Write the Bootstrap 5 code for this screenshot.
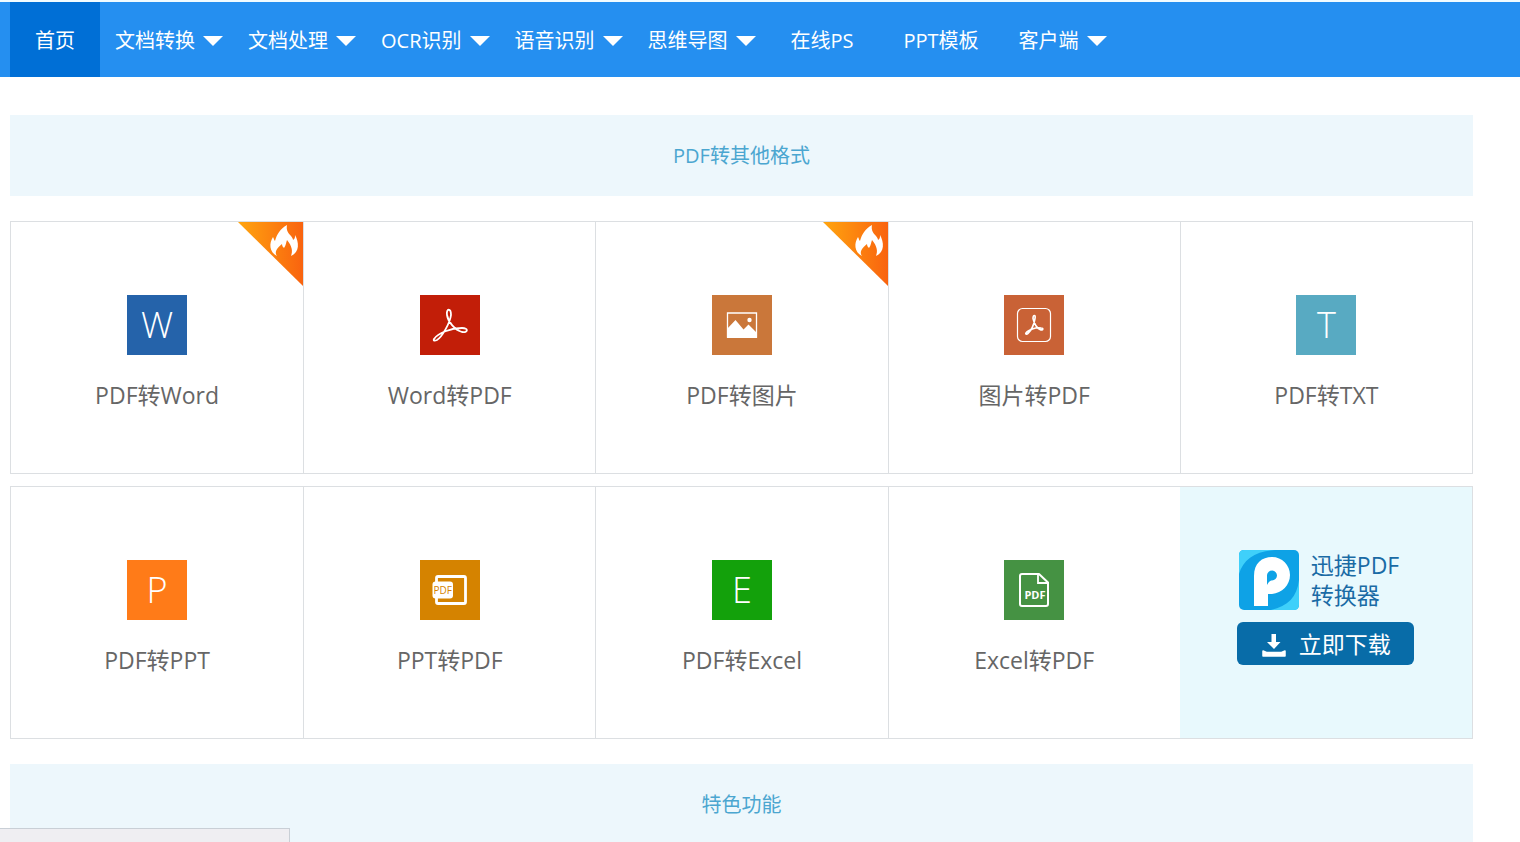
<!DOCTYPE html>
<html lang="zh-CN">
<head>
<meta charset="utf-8">
<meta name="viewport" content="width=device-width, initial-scale=1">
<title>迅捷PDF转换器</title>
<link href="https://cdn.jsdelivr.net/npm/bootstrap@5.3.0/dist/css/bootstrap.min.css" rel="stylesheet">
<style>
  body { font-family: "Open Sans", "Noto Sans CJK SC", sans-serif; font-size: 20px; line-height: 30px; color: #666; background: #fff; }
  .site-bar { background: #258ff0; border-top: 2px solid #f1fbff; padding-left: 10px; }
  .site-bar .nav-link { height: 75px; padding: 2px 25px 0; color: #fff; white-space: nowrap; }
  .site-bar .nav-link.has-menu { padding: 2px 10px 0 15px; gap: 8px; }
  .site-bar .nav-link.active { background: #006fd6; }
  .page-body { padding: 38px 47px 0 10px; }
  .section-band { height: 81px; background: #edf7fc; color: #4ba6d0; font-size: 20px; font-weight: 400; }
  .tool-row { border: 1px solid #dcdfe2; }
  .tool-row > .col + .col:not(.promo) { border-left: 1px solid #dcdfe2; }
  .tool { height: 251px; padding-top: 73px; gap: 25px; color: #666; font-size: 23px; }
  .tool-icon { width: 60px; height: 60px; color: #fff; font-size: 36px; font-weight: 300; }
  .hot-flag { width: 65px; height: 64px; }
  .promo { background: #e8f9fd; color: #1a6ba5; padding-bottom: 10px; gap: 12px; }
  .promo-head { width: 174px; gap: 12px; font-size: 23px; }
  .btn-get { width: 177px; height: 43px; gap: 12px; background: #086ca8; color: #fff; border: 0; border-radius: 6px; font-size: 23px; line-height: 30px; }
  .btn-get:hover { background: #075f94; color: #fff; }
  .gap-row { margin-top: 12px; }
  .gap-block { margin-top: 25px; }
  .status-strip { width: 290px; height: 14px; background: #efeef2; border: 1px solid #c9cfd6; border-width: 1px 1px 0 0; }
</style>
</head>
<body>
<svg class="position-absolute" width="0" height="0" aria-hidden="true">
  <defs>
    <linearGradient id="hotFill" x1="0" y1="0" x2="1" y2="0"><stop offset="0" stop-color="#ffa50f"/><stop offset="1" stop-color="#f9630f"/></linearGradient>
  </defs>
  <symbol id="caret" viewBox="0 0 20 10"><path d="M0 0h20L10 10z" fill="#fff"/></symbol>
  <symbol id="hot" viewBox="0 0 65 64">
    <path d="M0 0h65v64z" fill="url(#hotFill)"/>
    <path d="M39 34C31 30 31 21 35 15c1 2 1 3 2 4 2-7 5-12 12-16-1 5 1 8 4 11 1 1 2 3 2 4 2-1 2-3 2-5 4 7 5 17-4 21 2-5 1-10-4-16-1 3-1 5-3 8-1-1-2-2-2-4-5 4-8 8-5 12z" fill="#fff"/>
  </symbol>
</svg>

<nav class="site-bar" aria-label="主导航">
  <ul class="nav flex-nowrap">
    <li class="nav-item"><a class="nav-link active d-flex align-items-center" href="#" aria-current="page">首页</a></li>
    <li class="nav-item"><a class="nav-link has-menu d-flex align-items-center" href="#">文档转换<svg width="20" height="10"><use href="#caret"/></svg></a></li>
    <li class="nav-item"><a class="nav-link has-menu d-flex align-items-center" href="#">文档处理<svg width="20" height="10"><use href="#caret"/></svg></a></li>
    <li class="nav-item"><a class="nav-link has-menu d-flex align-items-center" href="#">OCR识别<svg width="20" height="10"><use href="#caret"/></svg></a></li>
    <li class="nav-item"><a class="nav-link has-menu d-flex align-items-center" href="#">语音识别<svg width="20" height="10"><use href="#caret"/></svg></a></li>
    <li class="nav-item"><a class="nav-link has-menu d-flex align-items-center" href="#">思维导图<svg width="20" height="10"><use href="#caret"/></svg></a></li>
    <li class="nav-item"><a class="nav-link d-flex align-items-center" href="#">在线PS</a></li>
    <li class="nav-item"><a class="nav-link d-flex align-items-center" href="#">PPT模板</a></li>
    <li class="nav-item"><a class="nav-link has-menu d-flex align-items-center" href="#">客户端<svg width="20" height="10"><use href="#caret"/></svg></a></li>
  </ul>
</nav>

<main class="page-body">
  <h2 class="section-band d-flex align-items-center justify-content-center mb-0">PDF转其他格式</h2>

  <div class="row row-cols-5 g-0 tool-row gap-block">
    <div class="col position-relative">
      <a class="tool d-flex flex-column align-items-center text-decoration-none" href="#">
        <span class="tool-icon d-flex align-items-center justify-content-center" style="background:#2563aa">W</span>
        <span>PDF转Word</span>
      </a>
      <svg class="hot-flag position-absolute top-0 end-0" aria-hidden="true"><use href="#hot"/></svg>
    </div>
    <div class="col">
      <a class="tool d-flex flex-column align-items-center text-decoration-none" href="#">
        <svg class="tool-icon" viewBox="0 0 60 60" style="background:#c21e08" aria-hidden="true">
          <path d="M14 44C18 38 31 33 42 33c7 0 6 5 0 4-7-2-14-10-15-17-1-7 4-7 4 0-1 8-9 22-14 25-2 1-4 1-3-1z" fill="none" stroke="#fff" stroke-width="1.8" stroke-linejoin="round"/>
        </svg>
        <span>Word转PDF</span>
      </a>
    </div>
    <div class="col position-relative">
      <a class="tool d-flex flex-column align-items-center text-decoration-none" href="#">
        <svg class="tool-icon" viewBox="0 0 60 60" style="background:#ca773a" aria-hidden="true">
          <path d="M15.500 18h29v24h-29z" fill="none" stroke="#fff" stroke-width="1.3"/>
          <path d="M15 34l8.500-9 8 9.500 5-5L45 38v5H15z" fill="#fff"/><circle cx="37.500" cy="25" r="2.200" fill="#fff"/>
        </svg>
        <span>PDF转图片</span>
      </a>
      <svg class="hot-flag position-absolute top-0 end-0" aria-hidden="true"><use href="#hot"/></svg>
    </div>
    <div class="col">
      <a class="tool d-flex flex-column align-items-center text-decoration-none" href="#">
        <svg class="tool-icon" viewBox="0 0 60 60" style="background:#c96236" aria-hidden="true">
          <rect x="13.500" y="13.500" width="33" height="33" rx="5" fill="none" stroke="#fff" stroke-width="1.200"/>
          <path d="M22 38c2-3 10-6 15-5 3 0 2 3-1 1.500-4-2-6-7-7-11 0-4 3-4 2 0-1 6-4 12-7 15-1 1-3 1-2-.500z" fill="none" stroke="#fff" stroke-width="1.600" stroke-linejoin="round"/>
        </svg>
        <span>图片转PDF</span>
      </a>
    </div>
    <div class="col">
      <a class="tool d-flex flex-column align-items-center text-decoration-none" href="#">
        <span class="tool-icon d-flex align-items-center justify-content-center" style="background:#58aac2">T</span>
        <span>PDF转TXT</span>
      </a>
    </div>
  </div>

  <div class="row row-cols-5 g-0 tool-row gap-row">
    <div class="col">
      <a class="tool d-flex flex-column align-items-center text-decoration-none" href="#">
        <span class="tool-icon d-flex align-items-center justify-content-center" style="background:#ff7b18">P</span>
        <span>PDF转PPT</span>
      </a>
    </div>
    <div class="col">
      <a class="tool d-flex flex-column align-items-center text-decoration-none" href="#">
        <svg class="tool-icon" viewBox="0 0 60 60" style="background:#d58300" aria-hidden="true">
          <rect x="16.500" y="16.500" width="29" height="27" rx="1.500" fill="none" stroke="#fff" stroke-width="2.800"/>
          <rect x="12.500" y="21.500" width="20.500" height="17" rx="3" fill="#fff"/>
          <text x="22.800" y="34" text-anchor="middle" font-family="Open Sans" font-size="10" font-weight="400" fill="#d58300">PDF</text>
        </svg>
        <span>PPT转PDF</span>
      </a>
    </div>
    <div class="col">
      <a class="tool d-flex flex-column align-items-center text-decoration-none" href="#">
        <span class="tool-icon d-flex align-items-center justify-content-center" style="background:#13a10b">E</span>
        <span>PDF转Excel</span>
      </a>
    </div>
    <div class="col">
      <a class="tool d-flex flex-column align-items-center text-decoration-none" href="#">
        <svg class="tool-icon" viewBox="0 0 60 60" style="background:#459243" aria-hidden="true">
          <path d="M18 14h17l9 8.500V44c0 1.500-1 2-2 2H18c-1.500 0-2-1-2-2V16c0-1.500 1-2 2-2z" fill="none" stroke="#fff" stroke-width="2" stroke-linejoin="round"/>
          <path d="M34 14v9h10" fill="none" stroke="#fff" stroke-width="1.800"/>
          <text x="31" y="39" text-anchor="middle" font-family="Open Sans" font-size="11" font-weight="700" fill="#fff">PDF</text>
        </svg>
        <span>Excel转PDF</span>
      </a>
    </div>
    <div class="col promo d-flex flex-column align-items-center justify-content-center">
      <div class="promo-head d-flex align-items-center">
        <svg width="60" height="60" viewBox="0 0 60 60" role="img" aria-label="迅捷PDF转换器">
          <rect width="60" height="60" rx="5" fill="#0ea2e6"/>
          <path d="M0 24V5q0-5 5-5h31C16 1 4 10 0 24zM60 30v25q0 5-5 5H32C49 56 58 47 60 30z" fill="#3fd0fa"/>
          <path d="M15 56V26C15 13 23 7 33 7s18 8 18 18-8 18-18 19h-4v12z" fill="#fff"/>
          <path d="M28 35V25a5 5 0 1 1 5 5.500c-2 0-3 1-5 4.500z" fill="#0ea2e6"/>
        </svg>
        <div>迅捷PDF<br>转换器</div>
      </div>
      <button type="button" class="btn btn-get d-flex align-items-center justify-content-center p-0">
        <svg width="26" height="26" viewBox="0 0 26 26" aria-hidden="true">
          <path d="M10.500 3h4.500v8h4.500L13 18 6 11h4.500z" fill="#fff"/>
          <path d="M2 20v5h22v-5l-3.500 1.500H5.500z" fill="#fff" stroke="#fff" stroke-width="1.500" stroke-linejoin="round"/>
        </svg>
        立即下载
      </button>
    </div>
  </div>

  <h2 class="section-band gap-block d-flex align-items-center justify-content-center mb-0">特色功能</h2>
</main>

<div class="status-strip position-fixed bottom-0 start-0"></div>
<script src="https://cdn.jsdelivr.net/npm/bootstrap@5.3.0/dist/js/bootstrap.bundle.min.js"></script>
</body>
</html>
